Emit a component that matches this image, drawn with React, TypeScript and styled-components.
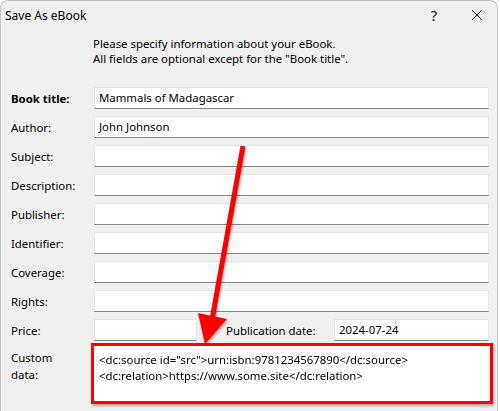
import styled, { createGlobalStyle } from 'styled-components'

const GlobalStyle = createGlobalStyle`
	html, body {
		margin: 0;
		padding: 0;
		background: #ffffff;
	}
	body {
		font-family: 'Noto Sans', 'Open Sans', sans-serif;
		font-size: 11.4px;
		color: #000000;
	}
`

const fields = ['Author', 'Subject', 'Description', 'Publisher', 'Identifier', 'Coverage', 'Rights']

const values: Record<string, string> = {
	Author: 'John Johnson',
}

export default function App(): JSX.Element {
	return (
		<>
			<GlobalStyle />
			<Window>
				<TitleBar>
					<TitleText>Save As eBook</TitleText>
					<TitleButton $width={46}>?</TitleButton>
					<TitleButton $width={40}>
						<svg width='12' height='12' viewBox='0 0 12 12'>
							<path d='M1 1 L11 11 M11 1 L1 11' stroke='#1a1a1a' strokeWidth='1' fill='none' />
						</svg>
					</TitleButton>
				</TitleBar>
				<Intro>
					Please specify information about your eBook.
					<br />
					All fields are optional except for the "Book title".
				</Intro>
				<Form>
					<Label $bold>Book title:</Label>
					<Field>Mammals of Madagascar</Field>
					{fields.map((f) => (
						<Row key={f}>
							<Label>{f}:</Label>
							<Field>{values[f] ?? ''}</Field>
						</Row>
					))}
					<Label>Price:</Label>
					<PriceRow>
						<Field $width={103} />
						<DateLabel>Publication date:</DateLabel>
						<Field $width={155}>2024-07-24</Field>
					</PriceRow>
					<Label $top>
						Custom
						<br />
						data:
					</Label>
					<Highlight>
						<TextArea>
							&lt;dc:source id="src"&gt;urn:isbn:9781234567890&lt;/dc:source&gt;
							<br />
							&lt;dc:relation&gt;https://www.some.site&lt;/dc:relation&gt;
						</TextArea>
					</Highlight>
				</Form>
				<Arrow width='500' height='411' viewBox='0 0 500 411'>
					<line x1='243' y1='146' x2='212' y2='320' stroke='#ff0000' strokeWidth='5' />
					<polygon points='198,313 227,319 205,344' fill='#ff0000' />
				</Arrow>
			</Window>
		</>
	)
}

const Window = styled.div`
	position: relative;
	box-sizing: border-box;
	width: 498px;
	height: 411px;
	background: #f0f0f0;
	border: 1px solid #c4c4c4;
	border-bottom: none;
	border-radius: 8px 8px 0 0;
	overflow: hidden;
`

const TitleBar = styled.div`
	display: flex;
	align-items: center;
	height: 28px;
	padding-left: 4px;
`

const TitleText = styled.div`
	flex: 1;
	font-size: 12px;
`

const TitleButton = styled.div<{ $width: number }>`
	width: ${(p) => p.$width}px;
	display: flex;
	justify-content: center;
	align-items: center;
	font-size: 15px;
	color: #1a1a1a;
`

const Intro = styled.div`
	box-sizing: border-box;
	padding: 7px 0 0 92px;
	line-height: 15px;
	height: 58px;
`

const Form = styled.div`
	display: grid;
	grid-template-columns: 83px 395px;
	row-gap: 7px;
	padding-left: 10px;
	align-items: center;
`

const Row = styled.div`
	display: contents;
`

const Label = styled.div<{ $bold?: boolean; $top?: boolean }>`
	font-weight: ${(p) => (p.$bold ? 700 : 400)};
	align-self: ${(p) => (p.$top ? 'start' : 'center')};
	padding-top: ${(p) => (p.$top ? '1px' : '0')};
	line-height: 17px;
`

const Field = styled.div<{ $width?: number }>`
	box-sizing: border-box;
	height: 22px;
	width: ${(p) => (p.$width ? `${p.$width}px` : '100%')};
	background: #ffffff;
	border: 1px solid #e6e6e6;
	border-bottom-color: #858585;
	padding: 0 4px;
	line-height: 20px;
	white-space: nowrap;
	overflow: hidden;
`

const PriceRow = styled.div`
	display: flex;
	align-items: center;
`

const DateLabel = styled.div`
	width: 108px;
	margin-left: 29px;
`

const Highlight = styled.div`
	margin: -5px 0 0 -3px;
	width: 402px;
	box-sizing: border-box;
	border: 3px solid #ff0000;
	filter: drop-shadow(1px 2px 1px rgba(0, 0, 0, 0.3));
`

const TextArea = styled.div`
	box-sizing: border-box;
	height: 55px;
	background: #ffffff;
	padding: 6px 5px;
	line-height: 16px;
	white-space: nowrap;
`

const Arrow = styled.svg`
	position: absolute;
	left: -1px;
	top: -1px;
	pointer-events: none;
	filter: drop-shadow(1px 2px 1px rgba(0, 0, 0, 0.3));
`
